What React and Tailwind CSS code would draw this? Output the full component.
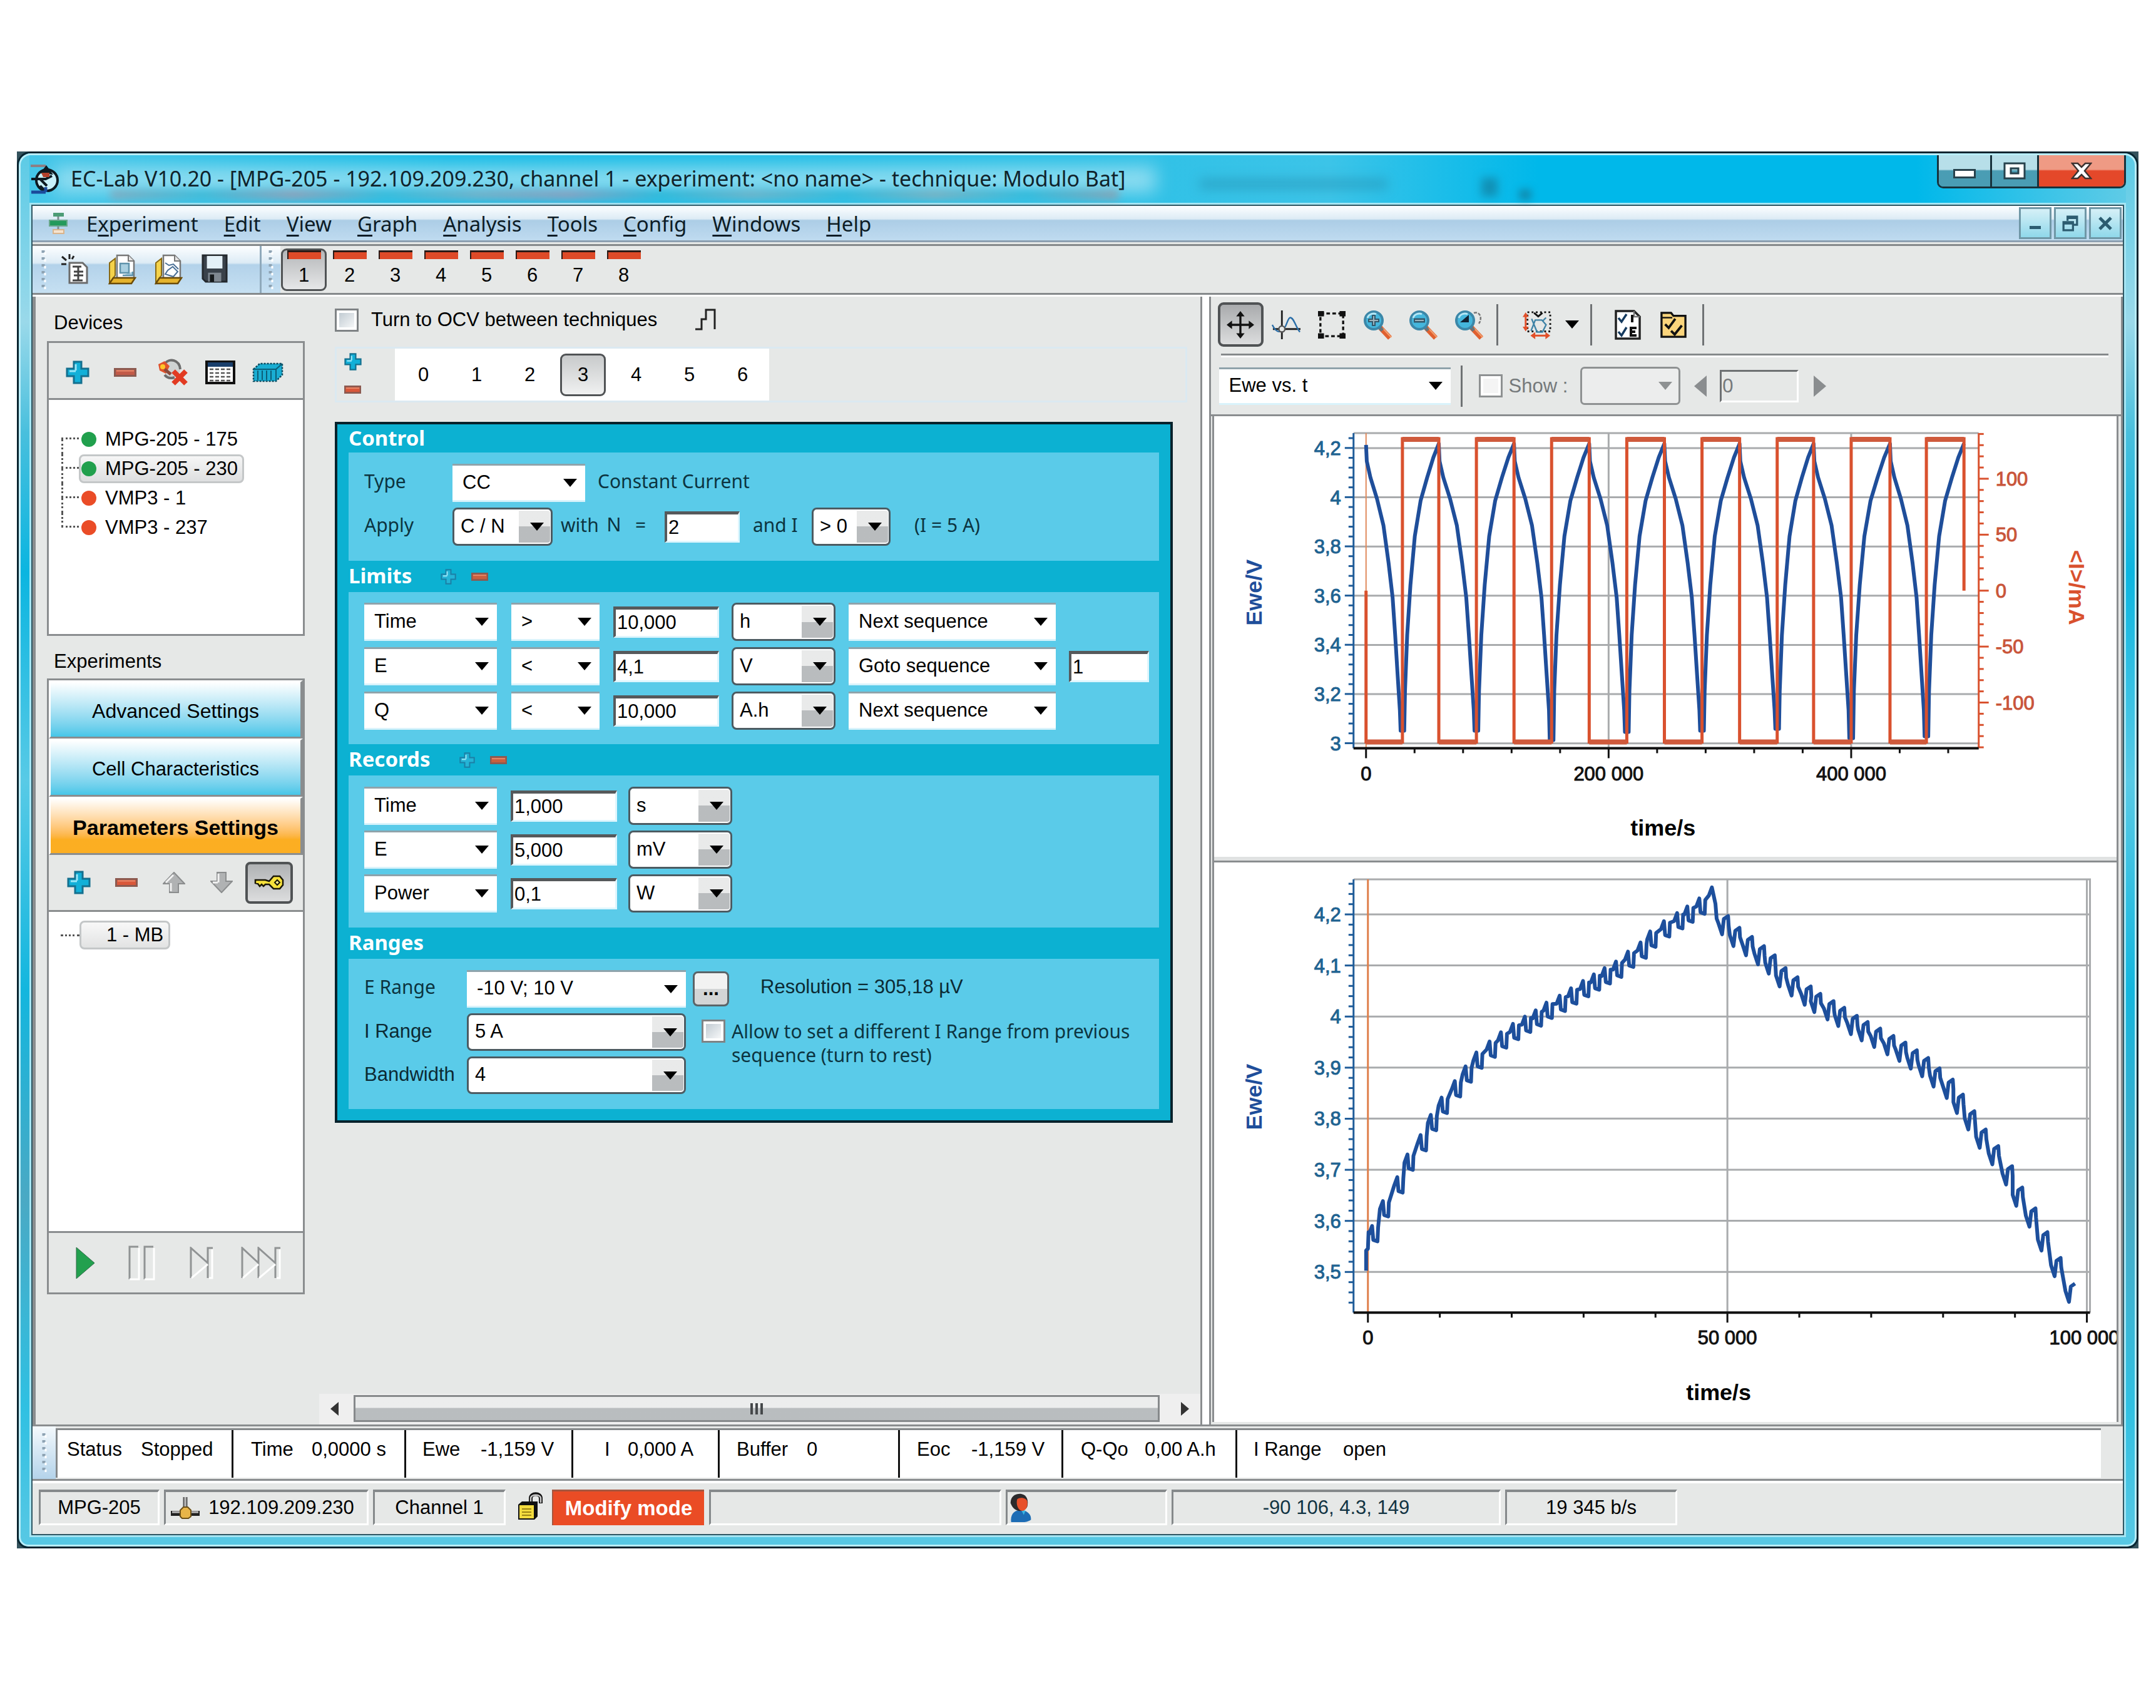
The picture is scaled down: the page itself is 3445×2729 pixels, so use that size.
import React from "react";

const UI = "font-['Liberation_Sans',sans-serif]";
const HUM = "font-['Noto_Sans',sans-serif]";

/* ---------- small icons ---------- */

function Plus({ className = "w-[38px] h-[38px]", dim = false }) {
  return (
    <svg viewBox="0 0 38 38" className={className} aria-hidden="true">
      <path d="M13 2H25V13H36V25H25V36H13V25H2V13H13Z" fill={dim ? "#25b4d6" : "#12b0d8"} stroke={dim ? "#1b7fa5" : "#14708f"} strokeWidth="3" />
      <path d="M16 16V6M6 17H16" stroke="#9be6f7" strokeWidth="3" fill="none" />
    </svg>
  );
}

function Minus({ className = "w-[36px] h-[14px]", color = "#d9573a" }) {
  return (
    <svg viewBox="0 0 36 14" preserveAspectRatio="none" className={className} aria-hidden="true">
      <rect x="1.5" y="1.5" width="33" height="11" fill={color} stroke="#8c5a50" strokeWidth="3" />
      <path d="M4 4.5H32" stroke="#e98a6c" strokeWidth="2" />
    </svg>
  );
}

function Tri({ dir = "down", color = "#000", className = "w-[24px] h-[14px]" }) {
  const d = { down: "M0 0H24L12 14Z", left: "M24 0V14L0 7Z", right: "M0 0V14L24 7Z" }[dir];
  return (
    <svg viewBox="0 0 24 14" preserveAspectRatio="none" className={className} aria-hidden="true">
      <path d={d} fill={color} />
    </svg>
  );
}

function AppIcon() {
  return (
    <svg viewBox="0 0 46 50" className="w-[46px] h-[50px]" aria-hidden="true">
      <path d="M0 4H24" stroke="#8d7f84" strokeWidth="4" />
      <circle cx="26" cy="27" r="17" fill="#c8f0fa" stroke="#0d1a22" strokeWidth="4" />
      <path d="M1 25H24L34 20M15 25L26 36" stroke="#0d1a22" strokeWidth="4" fill="none" />
      <path d="M15 16L25 3L36 18Z" fill="#0d1a22" />
      <path d="M17 15H30V22H20Z" fill="#b3402c" />
      <path d="M15 36L23 44" stroke="#0d1a22" strokeWidth="4" />
      <path d="M1 46H24M24 38V46" stroke="#1b4b9b" strokeWidth="5" />
    </svg>
  );
}

function NetIcon() {
  return (
    <svg viewBox="0 0 30 36" className="w-[30px] h-[36px]" aria-hidden="true">
      <path d="M15 6V32" stroke="#7d8c90" strokeWidth="3" />
      <rect x="7" y="1" width="17" height="6" fill="#4c9c76" />
      <rect x="1" y="13" width="28" height="9" fill="#239a5c" stroke="#6aa88c" strokeWidth="2" />
      <rect x="7" y="28" width="17" height="6" fill="#f5e3cf" stroke="#d9b48c" strokeWidth="2" />
    </svg>
  );
}

function NewDoc() {
  return (
    <svg viewBox="0 0 46 50" className="w-[46px] h-[50px]" aria-hidden="true">
      <path d="M13 14H34L41 21V46H13Z" fill="#fff" stroke="#6b6b6b" strokeWidth="3" />
      <path d="M13 0V8M1 4L8 10M0 16H8M20 3L17 8" stroke="#222" strokeWidth="3" />
      <path d="M18 20H32M27 20V42M20 28H35M20 34H35M18 42H34" stroke="#444" strokeWidth="3" />
    </svg>
  );
}

function OpenDoc({ plot }) {
  return (
    <svg viewBox="0 0 46 50" className="w-[46px] h-[50px]" aria-hidden="true">
      <path d="M3 14L12 7V34L3 46Z" fill="#f4d24a" stroke="#8a6a12" strokeWidth="2" />
      <path d="M15 2H33L42 11V38H15Z" fill="#fff" stroke="#777" strokeWidth="2.5" />
      <path d="M33 2V11H42" fill="#e3e3e3" stroke="#777" strokeWidth="2" />
      {plot ? (
        <path d="M18 14L24 18L31 16L39 24M18 32L22 26L30 20L38 28L31 36Z" fill="none" stroke="#4a6f95" strokeWidth="2" />
      ) : (
        <path d="M20 15H34V30H20ZM24 34H40V28" fill="#a9cfe0" stroke="#5f93ab" strokeWidth="2.5" />
      )}
      <path d="M3 47L9 38H44L38 47Z" fill="#e5b32d" stroke="#6b4b08" strokeWidth="2.5" />
    </svg>
  );
}

function Floppy() {
  return (
    <svg viewBox="0 0 44 48" className="w-[42px] h-[46px]" aria-hidden="true">
      <path d="M2 2H42V46H7L2 41Z" fill="#39414a" stroke="#23282d" strokeWidth="3" />
      <rect x="9" y="3" width="26" height="21" fill="#e4f1f8" />
      <rect x="11" y="31" width="22" height="15" fill="#7e8790" />
      <rect x="14" y="34" width="7" height="12" fill="#15191c" />
    </svg>
  );
}

function PlugX() {
  return (
    <svg viewBox="0 0 50 44" className="w-[50px] h-[44px]" aria-hidden="true">
      <circle cx="24" cy="17" r="13" fill="#cfd3d3" />
      <path d="M12 8C20 -2 36 2 37 17M12 26C16 31 22 32 28 30" fill="none" stroke="#6d6d6d" strokeWidth="4" />
      <path d="M2 9L12 4L20 12L14 24L4 19Z" fill="#e0532c" />
      <path d="M12 17L22 25" stroke="#8c4a3a" strokeWidth="5" />
      <circle cx="9" cy="13" r="4" fill="#ffc629" />
      <path d="M26 20L46 40M46 20L26 40" stroke="#e23b22" strokeWidth="8" />
    </svg>
  );
}

function TableIcon() {
  return (
    <svg viewBox="0 0 48 38" className="w-[48px] h-[38px]" aria-hidden="true">
      <rect x="2" y="2" width="44" height="34" fill="#fff" stroke="#111" strokeWidth="4" />
      <rect x="4" y="3" width="40" height="7" fill="#1a3f6c" />
      <path d="M7 14H42M7 20H42M7 26H42M7 32H42" stroke="#555" strokeWidth="2.5" strokeDasharray="6 3" />
    </svg>
  );
}

function BoxIcon() {
  return (
    <svg viewBox="0 0 50 32" className="w-[50px] h-[32px]" aria-hidden="true">
      <path d="M2 11L12 2H48V20L38 30H2Z" fill="#19add2" stroke="#0d4a5e" strokeWidth="2.5" strokeDasharray="3 2" />
      <path d="M2 11H38V30M38 11L48 2M9 13V28M16 13V28M23 13V28M30 13V28" stroke="#0c5e78" strokeWidth="2" fill="none" />
    </svg>
  );
}

function ArrowIcon({ down }) {
  return (
    <svg viewBox="0 0 36 34" className="w-[36px] h-[34px]" aria-hidden="true">
      <path
        d={down ? "M11 1H25V15H35L18 33L1 15H11Z" : "M18 1L35 19H25V33H11V19H1Z"}
        fill="#b0b2b3"
        stroke="#8b8d8e"
        strokeWidth="2"
      />
      <path d={down ? "M13 3V17M4 17H12" : "M13 31V18M5 17L17 5"} stroke="#f2f2f2" strokeWidth="3" fill="none" />
    </svg>
  );
}

function KeyIcon() {
  return (
    <svg viewBox="0 0 48 26" className="w-[48px] h-[26px]" aria-hidden="true">
      <path d="M2 9H18L24 11L31 3H41L46 9V17L41 23H31L24 16H18L15 19L12 16L9 19L6 15L2 14Z" fill="#f7e23c" stroke="#1a1708" strokeWidth="2.5" />
      <path d="M37 9L41 13L37 17L33 13Z" fill="#fff39b" stroke="#1a1708" strokeWidth="2" />
    </svg>
  );
}

function MoveIcon() {
  return (
    <svg viewBox="0 0 46 46" className="w-[44px] h-[44px]" aria-hidden="true">
      <path d="M23 4V42M4 23H42" stroke="#111" strokeWidth="3.5" />
      <path d="M23 0L30 9H16ZM23 46L30 37H16ZM0 23L9 16V30ZM46 23L37 16V30Z" fill="#111" />
    </svg>
  );
}

function CursorIcon() {
  return (
    <svg viewBox="0 0 48 48" className="w-[48px] h-[46px]" aria-hidden="true">
      <path d="M17 0V48M2 31H48" stroke="#222" strokeWidth="3" />
      <path d="M1 24C5 32 10 38 17 34C25 30 26 12 31 12C37 12 40 28 47 36" fill="none" stroke="#2a6ea8" strokeWidth="2.5" />
      <circle cx="17" cy="31" r="5" fill="#e6e8e7" stroke="#555" strokeWidth="2.5" />
    </svg>
  );
}

function SelectBoxIcon() {
  return (
    <svg viewBox="0 0 46 46" className="w-[44px] h-[46px]" aria-hidden="true">
      <rect x="4" y="4" width="38" height="38" fill="none" stroke="#111" strokeWidth="3.5" strokeDasharray="6 4" />
      <path d="M0 0H10V9H0ZM36 0H46V9H36ZM0 37H10V46H0ZM36 37H46V46H36Z" fill="#111" />
    </svg>
  );
}

function Lens({ kind }) {
  return (
    <svg viewBox="0 0 48 48" className="w-[48px] h-[48px]" aria-hidden="true">
      <path d="M28 28L44 45" stroke="#e0602f" strokeWidth="8" />
      <path d="M32 29L46 44" stroke="#f2a06f" strokeWidth="2" />
      <path d="M26 27L32 33" stroke="#6b7377" strokeWidth="6" />
      <circle cx="18" cy="17" r="14" fill="#45b6dc" stroke="#3c87a8" strokeWidth="4" />
      <path d="M8 13C10 6 18 5 22 7" stroke="#b5e7f5" strokeWidth="3" fill="none" />
      {kind === "in" && <path d="M18 8V26M9 17H27" stroke="#33586b" strokeWidth="6" />}
      {kind === "in" && <path d="M18 10V24M11 17H25" stroke="#9fb4bd" strokeWidth="2" />}
      {kind === "out" && <path d="M9 17H27" stroke="#33586b" strokeWidth="7" />}
      {kind === "out" && <path d="M11 17H25" stroke="#9fb4bd" strokeWidth="2" />}
      {kind === "back" && (
        <>
          <path d="M10 20L24 8V20Z" fill="#123" />
          <path d="M32 5C42 2 46 14 40 22" fill="none" stroke="#777" strokeWidth="2.5" strokeDasharray="5 2" />
        </>
      )}
    </svg>
  );
}

function RescaleIcon() {
  return (
    <svg viewBox="0 0 50 48" className="w-[48px] h-[46px]" aria-hidden="true">
      <rect x="9" y="3" width="38" height="32" fill="none" stroke="#111" strokeWidth="3" strokeDasharray="3 4" />
      <path d="M20 4L27 10L34 4" fill="none" stroke="#111" strokeWidth="3" />
      <path d="M15 34L22 16H33L40 24L34 36H25L16 14M40 12L34 18" fill="none" stroke="#3f83a6" strokeWidth="2.5" />
      <path d="M6 8V30M20 42H42" stroke="#e2502a" strokeWidth="3" />
      <path d="M6 3L11 11H1ZM6 35L11 27H1ZM14 42L22 36V48ZM47 42L39 36V48Z" fill="#e2502a" />
    </svg>
  );
}

function ChecksDoc() {
  return (
    <svg viewBox="0 0 42 48" className="w-[42px] h-[48px]" aria-hidden="true">
      <path d="M2 2H31L40 11V46H2Z" fill="#fff" stroke="#222" strokeWidth="3.5" />
      <path d="M31 2V11H40" fill="none" stroke="#777" strokeWidth="2.5" />
      <path d="M6 13L11 19L19 7M6 35L11 41L19 28" fill="none" stroke="#153a5e" strokeWidth="3.5" />
      <path d="M28 8V20M35 29H26V41H35M26 35H33" fill="none" stroke="#111" strokeWidth="4" />
    </svg>
  );
}

function ChecksFolder() {
  return (
    <svg viewBox="0 0 44 44" className="w-[42px] h-[42px]" aria-hidden="true">
      <path d="M2 2H18L22 7H42V42H2Z" fill="#fbd57c" stroke="#111" strokeWidth="3.5" />
      <path d="M2 10H20" stroke="#111" strokeWidth="2.5" />
      <path d="M8 21L14 27L25 12M18 32L24 38L36 23" fill="none" stroke="#111" strokeWidth="4" />
    </svg>
  );
}

function PulseIcon() {
  return (
    <svg viewBox="0 0 38 38" className="w-[38px] h-[38px]" aria-hidden="true">
      <path d="M1 34H11V18H18V3H32V34" fill="none" stroke="#222" strokeWidth="3" />
    </svg>
  );
}

/* ---------- form pieces ---------- */

function Select({ label, value, boxed = false, disabled = false, options = [], className = "" }) {
  return (
    <div className={"relative " + className}>
      <select
        aria-label={label}
        defaultValue={value}
        disabled={disabled}
        className={
          "block w-full h-full appearance-none text-[31px] leading-[36px] pb-[2px] outline-none " +
          (disabled
            ? "bg-[#eceded] border-[3px] border-[#8e9192] rounded-[7px] text-[#777]"
            : boxed
              ? "bg-white border-[3px] border-[#4c5b62] rounded-[8px] text-black pl-[10px]"
              : "bg-white border-t-[3px] border-t-[#8fa3ab] border-b-[3px] border-b-[#d9f3fb] text-black pl-[16px]")
        }
      >
        {[value, ...options].map((o) => (
          <option key={o}>{o}</option>
        ))}
      </select>
      {boxed ? (
        <span className="pointer-events-none absolute right-[4px] top-[5px] bottom-[5px] w-[50px] flex items-center justify-center pl-[8px] rounded-r-[4px] bg-linear-to-b from-[#e9eaea] from-50% to-[#b9bcbe] to-50%">
          <Tri className="w-[22px] h-[13px]" />
        </span>
      ) : (
        <span className="pointer-events-none absolute right-[13px] inset-y-0 flex items-center">
          <Tri className="w-[22px] h-[13px]" color={disabled ? "#8e9192" : "#000"} />
        </span>
      )}
    </div>
  );
}

function Field({ label, value, className = "" }) {
  return (
    <input
      aria-label={label}
      defaultValue={value}
      className={
        "h-[50px] self-center bg-white border-t-[5px] border-l-[4px] border-t-[#56595b] border-l-[#56595b] border-b-[3px] border-b-[#dff6fd] border-r-[3px] border-r-[#dff6fd] text-[31px] leading-[36px] pl-[2px] outline-none " +
        className
      }
    />
  );
}

function Check({ id, className = "" }) {
  return (
    <input
      id={id}
      type="checkbox"
      className={
        "shrink-0 appearance-none w-[38px] h-[37px] border-[3px] border-[#7f8385] bg-linear-to-br from-[#b9c4cc] to-white ring-[4px] ring-inset ring-white " +
        className
      }
    />
  );
}

function Section({ title, children, editable, first }) {
  return (
    <section>
      <header className={"flex items-center " + (first ? "h-[45px]" : "h-[50px]")}>
        <h2 className={HUM + " font-bold text-[33px] leading-[40px] text-white pb-[2px]"}>{title}</h2>
        {editable && (
          <span className="flex items-center gap-[24px] ml-[46px]">
            <button aria-label={"Add " + title} className="block"><Plus dim className="w-[25px] h-[25px]" /></button>
            <button aria-label={"Remove " + title} className="block"><Minus className="w-[27px] h-[13px]" color="#c9603f" /></button>
          </span>
        )}
      </header>
      <div className="bg-[#5acbe9] pl-[25px]">{children}</div>
    </section>
  );
}

/* ---------- window chrome ---------- */

function TitleBar() {
  return (
    <div className="relative flex h-[76px] items-center bg-[linear-gradient(90deg,#45c6e8_0%,#17bce6_20%,#2cc0e6_50%,#3cc4e8_62%,#00b8ea_72%,#00b8ea_90%,#5fcbe6_100%)] pl-[3px]">
      <div className="absolute left-[40px] top-[18px] w-[1760px] h-[42px] bg-[#a3e2f2]/80 blur-[14px]" />
      <div className="absolute left-[130px] top-[56px] w-[1610px] h-[14px] bg-[linear-gradient(90deg,#8e9fb0,#35b3d0,#a78fa5,#2fb6d6,#86a7ba,#a58fae,#22b2d4,#7ca9bb,#25b4d6,#8aa7b2,#25b4d6,#9a93a0)] blur-[7px] opacity-80" />
      <div className="absolute left-[1870px] top-[38px] w-[300px] h-[16px] bg-[#2795b5]/60 blur-[9px]" />
      <div className="absolute left-[2320px] top-[36px] w-[26px] h-[30px] bg-[#137f9f]/70 blur-[7px]" />
      <div className="absolute left-[2380px] top-[54px] w-[20px] h-[18px] bg-[#137f9f]/70 blur-[6px]" />
      <span className="relative ml-[-1px]"><AppIcon /></span>
      <h1 className={HUM + " relative ml-[18px] text-[34px] leading-[44px] pb-[2px] text-[#10232b] whitespace-nowrap"}>
        {"EC-Lab V10.20 - [MPG-205 - 192.109.209.230, channel 1 - experiment: <no name> - technique: Modulo Bat]"}
      </h1>
      <div className="relative ml-auto self-start flex h-[53px] rounded-b-[10px] border-[3px] border-t-0 border-[#17323c] overflow-hidden">
        <button aria-label="Minimize" className="w-[82px] flex items-center justify-center bg-linear-to-b from-[#b7dfe9] from-45% to-[#4a9db4] to-50%">
          <svg viewBox="0 0 36 16" className="w-[36px] h-[16px] mt-[10px]"><rect x="1.5" y="1.5" width="33" height="12" fill="#fff" stroke="#27424d" strokeWidth="3" /></svg>
        </button>
        <button aria-label="Maximize" className="w-[78px] flex items-center justify-center border-x-[3px] border-[#17323c] bg-linear-to-b from-[#b7dfe9] from-45% to-[#4a9db4] to-50%">
          <svg viewBox="0 0 36 28" className="w-[36px] h-[28px]"><path fillRule="evenodd" d="M2 2H34V26H2ZM12 10V18H24V10Z" fill="#fff" stroke="#27424d" strokeWidth="3" /></svg>
        </button>
        <button aria-label="Close" className="w-[136px] flex items-center justify-center bg-linear-to-b from-[#ef9a84] from-45% to-[#e4482a] to-50%">
          <svg viewBox="0 0 34 28" className="w-[34px] h-[28px]"><path d="M2 2H11L17 8L23 2H32L22 14L32 26H23L17 20L11 26H2L12 14Z" fill="#fff" stroke="#3d3230" strokeWidth="2.5" /></svg>
        </button>
      </div>
    </div>
  );
}

const MENU = ["Experiment", "Edit", "View", "Graph", "Analysis", "Tools", "Config", "Windows", "Help"];

function MenuBar() {
  const mdi = "w-[52px] h-[51px] flex items-center justify-center border-[3px] border-[#6f97a6] bg-linear-to-b from-[#d5f0f7] to-[#8fd8ea]";
  return (
    <nav className="flex h-[58px] items-center border-b-[3px] border-[#8c9fb0] bg-[linear-gradient(#fdfeff_0%,#dcebf5_38%,#accde6_42%,#bfdbf0_100%)] pl-[26px] pr-[2px]">
      <NetIcon />
      <ul className={HUM + " ml-[30px] flex gap-[41px] text-[33px] leading-[44px] pt-[2px] text-[#0d1c26]"}>
        {MENU.map((m) => (
          <li key={m}>
            <button className="block">
              {m === "Experiment" ? (<>E<span className="underline decoration-[3px] underline-offset-[5px]">x</span>periment</>) : (<><span className="underline decoration-[3px] underline-offset-[5px]">{m[0]}</span>{m.slice(1)}</>)}
            </button>
          </li>
        ))}
      </ul>
      <div className="ml-auto flex gap-[4px]">
        <button aria-label="Minimize child window" className={mdi}><span className="mt-[14px] block w-[18px] h-[5px] bg-[#2c5c70]" /></button>
        <button aria-label="Restore child window" className={mdi}>
          <svg viewBox="0 0 24 24" className="w-[26px] h-[26px]"><path d="M8 8V2H22V14H16M8 4H22M2 10H16V22H2ZM2 12H16" fill="none" stroke="#2c5c70" strokeWidth="3" /></svg>
        </button>
        <button aria-label="Close child window" className={mdi}>
          <svg viewBox="0 0 24 24" className="w-[24px] h-[24px]"><path d="M3 3L21 21M21 3L3 21" stroke="#2c5c70" strokeWidth="5" /></svg>
        </button>
      </div>
    </nav>
  );
}

function Grip() {
  return (
    <svg viewBox="0 0 8 66" className="w-[8px] h-[66px] shrink-0" aria-hidden="true">
      <path d="M3 2V66" stroke="#8ea3b3" strokeWidth="5" strokeDasharray="4 7" />
      <path d="M6 5V66" stroke="#fff" strokeWidth="3" strokeDasharray="4 7" />
    </svg>
  );
}

function ToolBar() {
  const blue = "bg-[linear-gradient(#fdfeff_0%,#dcebf5_36%,#b3d2ea_40%,#c6e0f2_100%)]";
  return (
    <div className="mt-[3px] flex h-[81px] border-y-[3px] border-[#85898b] bg-[#e6e8e7]">
      <div className={blue + " flex w-[366px] items-center border-r-[3px] border-[#8fa9bb] pl-[14px]"}>
        <Grip />
        <div className="ml-[10px] flex">
          {[
            ["New", <NewDoc />],
            ["Open experiment", <OpenDoc />],
            ["Open graph", <OpenDoc plot />],
            ["Save", <Floppy />],
          ].map(([n, icon]) => (
            <button key={n} aria-label={n} className="flex w-[74px] justify-center">{icon}</button>
          ))}
        </div>
      </div>
      <div className={blue + " flex w-[30px] items-center justify-center"}><Grip /></div>
      <div className="flex items-center pl-[1px]">
        {[1, 2, 3, 4, 5, 6, 7, 8].map((n) => (
          <button
            key={n}
            className={
              "flex h-[68px] w-[73px] flex-col items-center rounded-[9px] border-[3px] text-[31px] leading-[36px] " +
              (n === 1 ? "border-[#505355] bg-linear-to-b from-[#b5b7b9] to-[#e6e7e8]" : "border-transparent")
            }
          >
            <span className="block h-[14px] w-[54px] border-t-[3px] border-l-[2px] border-[#2b1a16] bg-[#de4a28]" />
            <span className="mt-[8px] block">{n}</span>
          </button>
        ))}
      </div>
    </div>
  );
}

/* ---------- sidebar ---------- */

const DEVICES = [
  ["MPG-205 - 175", "bg-[#21a04d]"],
  ["MPG-205 - 230", "bg-[#21a04d]"],
  ["VMP3 - 1", "bg-[#ea4c27]"],
  ["VMP3 - 237", "bg-[#ea4c27]"],
];

function Sidebar() {
  const cell = "flex w-[76px] h-[60px] items-center justify-center";
  const nav = "block h-[93px] w-full shrink-0 border-t-[3px] border-l-[3px] border-white border-b-[3px] border-r-[4px] border-b-[#8a8d8f] border-r-[#8a8d8f] pt-[4px] leading-[36px] ";
  return (
    <aside className="flex flex-col border-l-[5px] border-[#8a8d8f] pl-[18px] pr-[23px]">
      <h2 className="mt-[20px] pl-[11px] text-[31px] leading-[44px]">Devices</h2>
      <div className="mt-[7px] h-[471px] shrink-0 border-[3px] border-[#8a8d8f] bg-white">
        <div className="flex h-[91px] items-center border-b-[3px] border-[#8a8d8f] bg-[#e6e8e7] pl-[8px] pt-[5px]">
          <button aria-label="Add device" className={cell}><Plus /></button>
          <button aria-label="Remove device" className={cell}><Minus color="#c25a48" /></button>
          <button aria-label="Disconnect" className={cell}><PlugX /></button>
          <button aria-label="Device table" className={cell}><TableIcon /></button>
          <button aria-label="Modules" className={cell}><BoxIcon /></button>
        </div>
        <ul className="ml-[20px] mt-[39px] text-[31px]">
          {DEVICES.map(([name, color], i) => (
            <li key={name} className="flex h-[47px] items-center">
              <span className="flex h-full w-[28px] flex-col">
                <span className={"block h-[24px] w-full border-b-[3px] border-dotted border-[#555] " + (i > 0 ? "border-l-[3px]" : "")} />
                <span className={"block h-[23px] w-full border-[#555] " + (i < 3 ? "border-l-[3px] border-dotted" : "")} />
              </span>
              <button className={"flex h-[46px] items-center rounded-[8px] border-[3px] pl-[1px] pr-[7px] " + (i === 1 ? "border-[#c4c7c8] bg-linear-to-b from-[#f6f6f6] to-[#dedfe0]" : "border-transparent")}>
                <span className={"block h-[24px] w-[24px] rounded-full " + color} />
                <span className="ml-[14px] leading-[36px]">{name}</span>
              </button>
            </li>
          ))}
        </ul>
      </div>
      <h2 className="mt-[19px] pl-[11px] text-[31px] leading-[44px]">Experiments</h2>
      <div className="mt-[5px] flex h-[984px] shrink-0 flex-col border-[3px] border-[#8a8d8f] bg-white">
        <button className={nav + "text-[32px] bg-linear-to-b from-white to-[#45c6e8]"}>Advanced Settings</button>
        <button className={nav + "text-[31px] bg-linear-to-b from-white to-[#45c6e8]"}>Cell Characteristics</button>
        <button className={nav + "text-[34px] bg-linear-to-b from-white to-[#fcae22] to-75% font-bold"}>Parameters Settings</button>
        <div className="flex h-[91px] shrink-0 items-center border-b-[3px] border-[#8a8d8f] bg-[#e6e8e7] pl-[10px]">
          <button aria-label="Add technique" className={cell}><Plus /></button>
          <button aria-label="Remove technique" className={cell}><Minus /></button>
          <button aria-label="Move up" className={cell}><ArrowIcon /></button>
          <button aria-label="Move down" className={cell}><ArrowIcon down /></button>
          <button aria-label="Key" className="flex h-[67px] w-[76px] items-center justify-center rounded-[8px] border-[4px] border-[#505355] bg-linear-to-b from-[#b0b2b4] to-[#dcddde]"><KeyIcon /></button>
        </div>
        <div className="flex grow items-start pl-[19px] pt-[14px]">
          <span className="mt-[22px] w-[30px] border-t-[3px] border-dotted border-[#555]" />
          <button className="h-[46px] rounded-[8px] border-[3px] border-[#c4c7c8] bg-linear-to-b from-[#f8f8f8] to-[#e2e3e3] pl-[40px] pr-[8px] text-[31px] leading-[40px]">1 - MB</button>
        </div>
        <div className="flex h-[98px] shrink-0 items-center gap-[54px] border-t-[3px] border-[#8a8d8f] bg-[#e6e8e7] pl-[43px]">
          <button aria-label="Run"><svg viewBox="0 0 30 50" className="w-[30px] h-[50px]"><path d="M1 0L30 25L1 50Z" fill="#22a04e" stroke="#2e6b48" strokeWidth="1" /></svg></button>
          <button aria-label="Pause"><svg viewBox="0 0 44 56" className="w-[44px] h-[56px]"><path d="M2 54V2H16M26 54V2H40" fill="none" stroke="#909394" strokeWidth="3" /><path d="M2 54H17V4M26 54H41V4" fill="none" stroke="#fff" strokeWidth="3" /></svg></button>
          <button aria-label="Next"><svg viewBox="0 0 38 52" className="w-[38px] h-[52px]"><path d="M2 50V2L29 26M29 50V2H37" fill="none" stroke="#909394" strokeWidth="3" /><path d="M3 50L29 28M31 50H36V4" fill="none" stroke="#fff" strokeWidth="3" /></svg></button>
          <button aria-label="Fast forward" className="ml-[-10px]"><svg viewBox="0 0 64 52" className="w-[64px] h-[52px]"><path d="M2 50V2L28 26M28 50V2L55 26M55 50V2H63" fill="none" stroke="#909394" strokeWidth="3" /><path d="M3 50L28 28M29 50L55 28M57 50H62V4" fill="none" stroke="#fff" strokeWidth="3" /></svg></button>
        </div>
      </div>
    </aside>
  );
}

/* ---------- settings ---------- */

const LIMITS = [
  ["Time", ">", "10,000", "h", "Next sequence"],
  ["E", "<", "4,1", "V", "Goto sequence", "1"],
  ["Q", "<", "10,000", "A.h", "Next sequence"],
];
const RECORDS = [
  ["Time", "1,000", "s"],
  ["E", "5,000", "mV"],
  ["Power", "0,1", "W"],
];

function Settings() {
  const lab = HUM + " text-[30px] leading-[38px] text-[#0c3440]";
  return (
    <main className="flex min-w-0 flex-col border-r-[3px] border-[#8a8d8f]">
      <div className="pl-[25px] pr-[21px]">
        <div className="mt-[18px] flex h-[38px] items-center">
          <Check id="ocv" />
          <label htmlFor="ocv" className="ml-[20px] text-[31px] leading-[38px]">Turn to OCV between techniques</label>
          <span className="ml-[60px]"><PulseIcon /></span>
        </div>
        <div className="mt-[24px] flex h-[89px] border-[3px] border-[#dbe9f1]">
          <div className="flex w-[93px] flex-col items-start justify-between py-[7px] pl-[12px]">
            <button aria-label="Add sequence"><Plus className="w-[28px] h-[28px]" /></button>
            <button aria-label="Remove sequence" className="mb-[4px]"><Minus className="w-[27px] h-[13px]" /></button>
          </div>
          <div className="flex items-center bg-white pl-[3px]">
            {[0, 1, 2, 3, 4, 5, 6].map((n) => (
              <span key={n} className="flex w-[85px] justify-center">
                <button className={"h-[68px] w-[73px] rounded-[9px] border-[3px] text-[31px] leading-[36px] " + (n === 3 ? "border-[#505355] bg-linear-to-b from-[#c8cacb] to-[#f0f1f1]" : "border-transparent")}>{n}</button>
              </span>
            ))}
          </div>
        </div>
        <div className="mt-[31px] mr-[23px] border-[4px] border-[#07222c] bg-[#0cb1d2] px-[18px] pb-[18px]">
          <Section title="Control" first>
            <div className="flex flex-col gap-[9px] pt-[18px] pb-[24px]">
              <div className="flex h-[61px] items-center">
                <label className={lab + " w-[141px] pb-[6px]"}>Type</label>
                <Select label="Type" value="CC" options={["CV"]} className="h-full w-[212px]" />
                <span className={lab + " ml-[20px] pb-[6px]"}>Constant Current</span>
              </div>
              <div className="flex h-[61px] items-center">
                <label className={lab + " w-[141px] pb-[6px]"}>Apply</label>
                <Select label="Apply" value="C / N" boxed className="h-full w-[160px]" />
                <span className={lab + " ml-[13px] w-[166px] flex items-center gap-[13px] pb-[6px]"}>with <span className="font-['Liberation_Sans'] text-[31px]">N</span><span className="ml-[10px]">=</span></span>
                <Field label="N" value="2" className="w-[120px]" />
                <span className={lab + " ml-[21px] w-[94px] pb-[6px]"}>and I</span>
                <Select label="Sign of I" value="> 0" boxed className="h-full w-[126px]" />
                <span className={lab + " ml-[38px] pb-[6px]"}>(I = 5 A)</span>
              </div>
            </div>
          </Section>
          <Section title="Limits" editable>
            <div className="flex flex-col gap-[10px] pt-[17px] pb-[23px]">
              {LIMITS.map(([q, op, v, u, act, seq], i) => (
                <div key={i} className="flex h-[61px]">
                  <Select label="Quantity" value={q} className="w-[212px]" />
                  <Select label="Operator" value={op} className="ml-[23px] w-[141px]" />
                  <Field label="Value" value={v} className="ml-[22px] w-[169px]" />
                  <Select label="Unit" value={u} boxed className="ml-[20px] w-[166px]" />
                  <Select label="Action" value={act} className="ml-[21px] w-[331px]" />
                  {seq && <Field label="Target sequence" value={seq} className="ml-[21px] w-[128px]" />}
                </div>
              ))}
            </div>
          </Section>
          <Section title="Records" editable>
            <div className="flex flex-col gap-[9px] pt-[18px] pb-[24px]">
              {RECORDS.map(([q, v, u]) => (
                <div key={q} className="flex h-[61px]">
                  <Select label="Quantity" value={q} className="w-[212px]" />
                  <Field label="Value" value={v} className="ml-[22px] w-[170px]" />
                  <Select label="Unit" value={u} boxed className="ml-[18px] w-[166px]" />
                </div>
              ))}
            </div>
          </Section>
          <Section title="Ranges">
            <div className="flex flex-col gap-[9px] pt-[18px] pb-[24px]">
              <div className="flex h-[60px] items-center">
                <label className={lab + " w-[164px] pb-[6px]"}>E Range</label>
                <Select label="E Range" value="-10 V; 10 V" className="h-full w-[350px]" />
                <button className="ml-[11px] h-[56px] w-[58px] rounded-[8px] border-[3px] border-[#5b6468] bg-linear-to-b from-[#f2f2f2] from-50% to-[#d3d5d6] to-50% text-[31px] font-bold leading-[40px]">...</button>
                <span className="ml-[50px] pb-[6px] text-[31px] leading-[36px] text-[#0c2a34]">Resolution = 305,18 µV</span>
              </div>
              <div className="flex h-[60px] items-center">
                <label className="w-[164px] pb-[2px] text-[31px] leading-[36px] text-[#0c2a34]">I Range</label>
                <Select label="I Range" value="5 A" boxed className="h-full w-[350px]" />
                <div className="ml-[25px] flex h-[40px] items-start">
                  <Check id="allow" />
                  <label htmlFor="allow" className={HUM + " ml-[10px] w-[660px] text-[30px] leading-[38px] text-[#0c3440]"}>
                    Allow to set a different I Range from previous sequence (turn to rest)
                  </label>
                </div>
              </div>
              <div className="flex h-[60px] items-center">
                <label className="w-[164px] pb-[2px] text-[31px] leading-[36px] text-[#0c2a34]">Bandwidth</label>
                <Select label="Bandwidth" value="4" boxed className="h-full w-[350px]" />
              </div>
            </div>
          </Section>
        </div>
      </div>
      <div className="mt-auto flex h-[49px] items-center bg-[#efefef] pl-[18px] pb-[2px] pr-[18px]">
        <button aria-label="Scroll left"><Tri dir="left" color="#333" className="block w-[13px] h-[22px]" /></button>
        <div className="ml-[24px] mr-[34px] flex h-[43px] flex-1 items-center justify-center gap-[4px] border-[3px] border-[#86898b] bg-linear-to-b from-[#eceded] from-45% to-[#b9bdbf] to-50%">
          <span className="h-[18px] w-[4px] bg-[#45484a]" />
          <span className="h-[18px] w-[4px] bg-[#45484a]" />
          <span className="h-[18px] w-[4px] bg-[#45484a]" />
        </div>
        <button aria-label="Scroll right"><Tri dir="right" color="#333" className="block w-[13px] h-[22px]" /></button>
      </div>
    </main>
  );
}

/* ---------- charts ---------- */

const range = (n) => Array.from({ length: n }, (_, i) => i);

function ChartOne() {
  const L = 223, R = 1223, T = 27, B = 531;
  const y = (v) => 51 + (4.2 - v) * 393.5;
  const x = (k) => 243 + k * 1.94;
  const yr = (i) => 279 - i * 1.79;
  const top = 36, bottom = 521;
  const edges = [[0, 30], [60, 91], [122, 153], [184, 215], [246, 277], [308, 339], [369, 400], [432, 462]];
  const peaks = [0, 60, 122, 184, 246, 308, 369, 432, 493];
  let square = `M${x(0)} 279V${bottom}`;
  edges.forEach(([, up], i) => {
    square += `H${x(up)}V${top}H${x(peaks[i + 1])}V${i < 7 ? bottom : 279}`;
  });
  let wave = "";
  edges.forEach(([, up], i) => {
    const a = x(peaks[i]), m = x(up), b = x(peaks[i + 1]);
    const lo = [503, 503, 518, 505, 503, 500, 515, 512][i];
    const f = (t) => a + (m - a) * t;
    const g = (t) => m + (b - m) * t;
    const fall = [[0, 46], [0.02, 72], [0.12, 98], [0.3, 132], [0.48, 175], [0.62, 235], [0.73, 290], [0.8, 350], [0.87, 415], [0.93, 470], [0.95, lo]];
    const rise = [[0.05, lo], [0.07, 440], [0.13, 350], [0.22, 270], [0.34, 192], [0.5, 135], [0.68, 98], [0.85, 66], [1, 44]];
    wave += (i === 0 ? "M" : "L") + fall.map(([t, v]) => `${f(t).toFixed(1)} ${v}`).join("L");
    wave += "L" + rise.map(([t, v]) => `${g(t).toFixed(1)} ${v}`).join("L");
  });
  return (
    <svg viewBox="0 0 1444 705" className="block h-auto w-full bg-white" role="img" aria-label="Ewe and current versus time">
      <g stroke="#a9abad" strokeWidth="3">
        {[4.2, 4, 3.8, 3.6, 3.4, 3.2, 3].map((v) => <path key={v} d={`M${L} ${y(v)}H${R}`} />)}
        <path d={`M${L} ${T}H${R}M${x(200)} ${T}V${B}M${x(400)} ${T}V${B}`} fill="none" />
      </g>
      <path d={`M${x(0)} ${T}V${B}`} stroke="#e08a5c" strokeWidth="2" />
      <path d={wave} fill="none" stroke="#1f4e9a" strokeWidth="6" strokeLinejoin="round" />
      <path d={square} fill="none" stroke="#d9512e" strokeWidth="5" />
      <path d={edges.map(([, up], i) => `M${x(up)} ${top + 1}H${x(peaks[i + 1])}M${x(peaks[i])} ${bottom}H${x(up)}`).join("")} stroke="#cf5a3c" strokeWidth="8" />
      <path d={`M${L} ${T}V${B}`} stroke="#1f5c99" strokeWidth="3" />
      <path d={`M${R} ${T}V${B}`} stroke="#d9512e" strokeWidth="3" />
      <path d={`M${L} ${B}H${R}`} stroke="#111" strokeWidth="4" />
      <g stroke="#1f5c99" strokeWidth="3">
        {range(32).map((i) => <path key={i} d={`M${i % 5 === 0 ? L - 14 : L - 8} ${523 - i * 15.74}H${L}`} />)}
      </g>
      <g stroke="#d9512e" strokeWidth="3">
        {range(29).map((i) => <path key={i} d={`M${R} ${yr((i - 14) * 10)}H${(i - 14) % 5 === 0 ? R + 16 : R + 8}`} />)}
      </g>
      <g stroke="#111" strokeWidth="3">
        {range(13).map((i) => <path key={i} d={`M${x(i * 40)} ${B}V${i % 5 === 0 ? B + 16 : B + 8}`} />)}
      </g>
      <g fill="#1f6391" fontSize="31" textAnchor="end" stroke="#1f6391">
        {[["4,2", 4.2], ["4", 4], ["3,8", 3.8], ["3,6", 3.6], ["3,4", 3.4], ["3,2", 3.2], ["3", 3]].map(([t, v]) => <text key={t} x="203" y={y(v) + 11}>{t}</text>)}
      </g>
      <g fill="#c9553a" fontSize="31" stroke="#c9553a">
        {[100, 50, 0, -50, -100].map((v) => <text key={v} x="1250" y={yr(v) + 11}>{v}</text>)}
      </g>
      <g fill="#111" fontSize="31" textAnchor="middle" stroke="#111">
        <text x={x(0)} y="583">0</text>
        <text x={x(200)} y="583">200 000</text>
        <text x={x(400)} y="583">400 000</text>
      </g>
      <text x="718" y="671" fontSize="36" fontWeight="bold" textAnchor="middle">time/s</text>
      <text transform="translate(76 282) rotate(-90)" fontSize="36" fontWeight="bold" textAnchor="middle" fill="#1f4e9a">Ewe/V</text>
      <text transform="translate(1367 274) rotate(90)" fontSize="36" fontWeight="bold" textAnchor="middle" fill="#d9512e">{"<I>/mA"}</text>
    </svg>
  );
}

const RISE = [[7, 1003], [25, 935], [49, 870], [66, 808], [88, 755], [105, 700], [123, 653], [145, 608], [163, 568], [181, 530], [203, 500], [222, 475], [242, 452], [262, 432], [280, 415], [298, 394], [320, 375], [339, 355], [359, 335], [377, 317], [395, 300], [414, 282], [434, 255], [455, 230], [471, 200], [494, 172], [516, 150], [533, 132], [553, 110], [574, 80]];
const FALL = [[601, 158], [620, 190], [641, 215], [661, 240], [679, 265], [697, 300], [717, 325], [739, 350], [755, 370], [777, 390], [795, 408], [816, 430], [834, 447], [855, 465], [877, 485], [897, 503], [916, 524], [935, 545], [954, 573], [976, 604], [993, 645], [1012, 690], [1031, 740], [1052, 785], [1075, 840], [1092, 898], [1114, 955], [1134, 1020], [1156, 1090], [1180, 1160]];

function ChartTwo() {
  const L = 223, R = 1401, T = 27, B = 720;
  const y = (v) => 83 + (4.2 - v) * 817;
  const x = (k) => 246 + k * 11.5;
  const px = (a) => (246 + a * 0.9585).toFixed(1);
  const py = (b) => (b * 0.5867 - 7).toFixed(1);
  const pts = [[-3, 1125], [-3, 1070], [0, 1065], [1, 1020]];
  RISE.forEach(([a, b], i) => {
    pts.push([a - 5, b + 22], [a, b]);
    if (i < RISE.length - 1) pts.push([a + 2, b + 38], [a + 9, b + 42], [a + 10, b + 4]);
  });
  pts.push([580, 125], [582, 165]);
  FALL.forEach(([a, b]) => {
    pts.push([a - 16, b + 20], [a - 10, b + 50], [a - 7, b + 8], [a, b], [a + 1, b + 26]);
  });
  pts.pop();
  return (
    <svg viewBox="0 0 1444 895" className="block h-auto w-full bg-white" role="img" aria-label="Ewe versus time, detail">
      <g stroke="#a9abad" strokeWidth="3" fill="none">
        {range(8).map((i) => <path key={i} d={`M${L} ${y(3.5 + i * 0.1)}H${R}`} />)}
        <path d={`M${L} ${T}H${R}V${B}M${x(50)} ${T}V${B}M${x(100)} ${T}V${B}`} />
      </g>
      <path d={`M${x(0)} ${T}V${B}`} stroke="#df7f4b" strokeWidth="3" />
      <path d={"M" + pts.map(([a, b]) => `${px(a)} ${py(b)}`).join("L")} fill="none" stroke="#1d4f9c" strokeWidth="6" strokeLinejoin="round" />
      <path d={`M${L} ${T}V${B}`} stroke="#1f5c99" strokeWidth="3" />
      <path d={`M${L} ${B}H${R}`} stroke="#111" strokeWidth="4" />
      <g stroke="#1f5c99" strokeWidth="3">
        {range(42).map((i) => <path key={i} d={`M${(i - 3) % 5 === 0 ? L - 14 : L - 8} ${655 - (i - 3) * 16.34}H${L}`} />)}
      </g>
      <g stroke="#111" strokeWidth="3">
        {range(11).map((i) => <path key={i} d={`M${x(i * 10)} ${B}V${i % 5 === 0 ? B + 16 : B + 8}`} />)}
      </g>
      <g fill="#1f6391" fontSize="31" textAnchor="end" stroke="#1f6391">
        {["4,2", "4,1", "4", "3,9", "3,8", "3,7", "3,6", "3,5"].map((t, i) => <text key={t} x="203" y={y(4.2 - i * 0.1) + 11}>{t}</text>)}
      </g>
      <g fill="#111" fontSize="31" textAnchor="middle" stroke="#111">
        <text x={x(0)} y="771">0</text>
        <text x={x(50)} y="771">50 000</text>
        <text x={x(100) - 4} y="771">100 000</text>
      </g>
      <text x="807" y="860" fontSize="36" fontWeight="bold" textAnchor="middle">time/s</text>
      <text transform="translate(76 375) rotate(-90)" fontSize="36" fontWeight="bold" textAnchor="middle" fill="#1f4e9a">Ewe/V</text>
    </svg>
  );
}

function Graphs() {
  const cell = "flex w-[73px] h-[70px] items-center justify-center";
  const sep = <span className="h-[66px] w-[3px] bg-[#6f7274]" />;
  return (
    <section className="flex min-w-0 flex-col border-r-[3px] border-[#8a8d8f]">
      <div className="flex h-[91px] items-center pb-[2px] pl-[11px]">
        <button aria-label="Move" className="flex h-[71px] w-[73px] items-center justify-center rounded-[9px] border-[4px] border-[#505355] bg-linear-to-b from-[#a9abad] to-[#dcddde]"><MoveIcon /></button>
        <button aria-label="Cursor" className={cell}><CursorIcon /></button>
        <button aria-label="Select region" className={cell}><SelectBoxIcon /></button>
        <button aria-label="Zoom in" className={cell}><Lens kind="in" /></button>
        <button aria-label="Zoom out" className={cell}><Lens kind="out" /></button>
        <button aria-label="Zoom back" className={cell}><Lens kind="back" /></button>
        <span className="ml-[7px] flex">{sep}</span>
        <button aria-label="Rescale" className={cell + " ml-[26px]"}><RescaleIcon /></button>
        <button aria-label="Rescale options" className="ml-[8px]"><Tri className="block w-[22px] h-[13px]" /></button>
        <span className="ml-[18px] flex">{sep}</span>
        <button aria-label="Selector" className={cell + " ml-[21px]"}><ChecksDoc /></button>
        <button aria-label="Graph properties" className={cell}><ChecksFolder /></button>
        <span className="ml-[9px] flex">{sep}</span>
      </div>
      <div className="ml-[16px] mr-[20px] h-[6px] border-t-[3px] border-b-[3px] border-t-[#85898b] border-b-white" />
      <div className="flex h-[94px] items-center border-b-[3px] border-[#8a8d8f] pl-[16px]">
        <Select label="Graph" value="Ewe vs. t" className="-ml-[3px] h-[60px] w-[370px]" />
        <span className="ml-[16px] flex">{sep}</span>
        <Check id="show" className="ml-[26px] bg-none bg-[#f4f4f4] border-[#8e9192]" />
        <label htmlFor="show" className="ml-[10px] text-[31px] leading-[36px] text-[#75797b]">Show :</label>
        <Select label="Show cycle" value="" disabled className="ml-[20px] h-[61px] w-[160px]" />
        <button aria-label="Previous" className="ml-[22px]"><Tri dir="left" color="#8a8d8f" className="block w-[20px] h-[34px]" /></button>
        <input aria-label="Cycle" defaultValue="0" disabled className="ml-[21px] h-[52px] w-[126px] border-[3px] border-t-[#6d7072] border-l-[#6d7072] border-b-white border-r-white bg-[#e6e8e7] pl-[1px] text-[31px] leading-[36px] text-[#75797b]" />
        <button aria-label="Next" className="ml-[24px]"><Tri dir="right" color="#8a8d8f" className="block w-[20px] h-[34px]" /></button>
      </div>
      <div className="ml-[2px] mr-[4px] border-x-[3px] border-[#8a8d8f]">
        <ChartOne />
        <div className="h-[9px] border-b-[3px] border-[#8a8d8f] bg-[#e0e2e2]" />
        <ChartTwo />
      </div>
    </section>
  );
}

/* ---------- status rows ---------- */

const STATUS = [
  ["Status", "Stopped", "w-[281px] pl-[15px]", "w-[118px]"],
  ["Time", "0,0000 s", "w-[276px] pl-[28px]", "w-[97px]"],
  ["Ewe", "-1,159 V", "w-[267px] pl-[26px]", "w-[93px]"],
  ["I", "0,000 A", "w-[234px] pl-[50px]", "w-[37px]"],
  ["Buffer", "0", "w-[288px] pl-[27px]", "w-[112px]"],
  ["Eoc", "-1,159 V", "w-[261px] pl-[27px]", "w-[87px]"],
  ["Q-Qo", "0,00 A.h", "w-[278px] pl-[28px]", "w-[102px]"],
  ["I Range", "open", "flex-1 pl-[26px]", "w-[143px]"],
];

function StatusInfo() {
  return (
    <div className="flex h-[90px] border-y-[3px] border-[#8a8d8f] bg-[#e6e8e7] text-[31px]">
      <div className="flex w-[37px] items-center justify-center bg-linear-to-b from-[#f4f9fc] to-[#b4d3ea]"><Grip /></div>
      <dl className="mt-[3px] mb-[2px] mr-[35px] flex flex-1 border-t-[3px] border-l-[3px] border-[#85898b] bg-white">
        {STATUS.map(([k, v, w, kw], i) => (
          <div key={k} className={w + " flex whitespace-nowrap pt-[13px] leading-[36px] " + (i < 7 ? "border-r-[3px] border-[#111]" : "")}>
            <dt className={kw}>{k}</dt>
            <dd>{v}</dd>
          </div>
        ))}
      </dl>
    </div>
  );
}

function StatusBar() {
  const c = "flex h-[57px] items-center justify-center border-t-[4px] border-l-[3px] border-t-[#85898b] border-l-[#85898b] border-b-[3px] border-r-[3px] border-b-white border-r-white text-[31px] leading-[36px] whitespace-nowrap ";
  return (
    <footer className="flex h-[85px] items-start border-t-[4px] border-white bg-[#e6e8e7] pl-[10px] pt-[10px]">
      <div className={c + "w-[193px]"}>MPG-205</div>
      <div className={c + "ml-[7px] w-[327px] gap-[14px] pr-[12px]"}>
        <svg viewBox="0 0 46 36" className="w-[46px] h-[36px]" aria-hidden="true">
          <path d="M23 1V20" stroke="#555" strokeWidth="7" /><path d="M23 1V20" stroke="#bbb" strokeWidth="3" />
          <path d="M0 27H46" stroke="#222" strokeWidth="8" /><path d="M2 25H44" stroke="#bbb" strokeWidth="3" />
          <path d="M15 22L20 17H27L32 22V32L28 35H18L15 32Z" fill="#e8b548" stroke="#6e5218" strokeWidth="2" />
        </svg>
        <span>192.109.209.230</span>
      </div>
      <div className={c + "ml-[7px] w-[212px]"}>Channel 1</div>
      <svg viewBox="0 0 42 46" className="ml-[18px] mt-[4px] w-[42px] h-[46px]" aria-hidden="true">
        <path d="M22 20V10C22 1 38 1 38 10V18" fill="none" stroke="#111" strokeWidth="6" />
        <path d="M22 19V10C22 3 38 3 38 10V17" fill="none" stroke="#c9c9c9" strokeWidth="2.5" />
        <path d="M2 20L8 15H33V39L28 44H2Z" fill="#111" />
        <rect x="4" y="21" width="23" height="21" fill="#f3dc3f" />
        <path d="M8 27H23M8 32H23M8 37H23" stroke="#9c8415" strokeWidth="2" />
      </svg>
      <div className="ml-[14px] flex h-[57px] w-[243px] items-center justify-center border-t-[3px] border-l-[2px] border-[#a5563f] bg-[#ea4c25] text-[33px] font-bold leading-[36px] text-white whitespace-nowrap">Modify mode</div>
      <div className={c + "ml-[8px] w-[467px]"} />
      <div className={c + "ml-[7px] w-[258px] !justify-start"}>
        <svg viewBox="0 0 38 48" className="ml-[2px] w-[38px] h-[46px]" aria-hidden="true">
          <path d="M3 48C1 34 10 28 18 28C28 28 37 34 36 44C30 49 12 50 3 48Z" fill="#1d6db5" />
          <path d="M20 28L24 36L27 29Z" fill="#39b8e4" />
          <path d="M2 16C2 4 12 0 20 1C30 3 32 12 30 22C26 32 8 34 2 16Z" fill="#2c2a2c" />
          <path d="M13 10C18 5 30 8 30 14C31 24 26 30 20 29C14 27 11 18 13 10Z" fill="#e8502a" />
        </svg>
      </div>
      <div className={c + "ml-[7px] w-[526px] text-[#123443]"}>-90 106, 4.3, 149</div>
      <div className={c + "ml-[7px] w-[275px]"}>19 345 b/s</div>
    </footer>
  );
}

export default function App() {
  return (
    <div className={UI + " flex min-h-screen flex-col bg-white pt-[242px] pr-[28px] pb-[255px] pl-[27px] text-black"}>
      <div className="flex flex-1 flex-col bg-[#33525c]">
        <div className="flex flex-1 flex-col overflow-hidden rounded-t-[22px] rounded-b-[18px] border-[3px] border-[#0a2530] bg-[#4fc5e3]">
          <div className="flex flex-1 flex-col overflow-hidden rounded-t-[19px] rounded-b-[15px] border-[3px] border-[#b9edf8] bg-[linear-gradient(#5ccbe6_0%,#9ad9ea_12%,#48bfdd_20%,#0bb5e0_30%,#58cae6_45%,#13b6de_60%,#4aa9c4_75%,#2fc0e2_90%,#58c8e4_100%)] px-[14px] pb-[12px]">
            <TitleBar />
            <div className="flex flex-1 flex-col border-[3px] border-[#a5e5f3]">
              <div className="flex flex-1 flex-col border-[2px] border-[#2f5663] bg-[#e6e8e7]">
                <MenuBar />
                <ToolBar />
                <div className="grid flex-1 grid-cols-[458px_minmax(0,1411fr)_14px_minmax(0,1458fr)] border-t-[3px] border-white">
                  <Sidebar />
                  <Settings />
                  <div className="border-r-[3px] border-[#8a8d8f] bg-white" />
                  <Graphs />
                </div>
                <StatusInfo />
                <StatusBar />
              </div>
            </div>
          </div>
        </div>
      </div>
    </div>
  );
}
